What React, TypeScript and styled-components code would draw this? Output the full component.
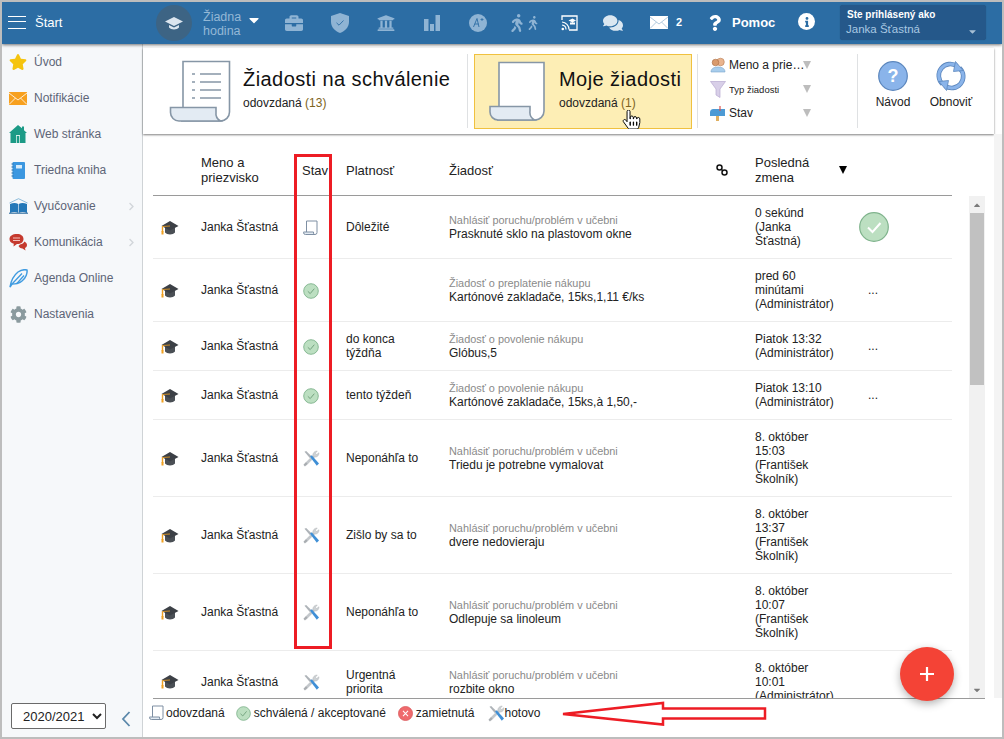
import React from "react";
import styled, { createGlobalStyle } from "styled-components";
import { FaBriefcase, FaCog, FaHandPointer, FaStar, FaUniversity, FaWalking, FaComments, FaQuestion, FaInfo, FaCaretDown, FaCaretUp, FaChevronRight } from "react-icons/fa";

const Global = createGlobalStyle`
  html, body { margin: 0; padding: 0; background: #fff; }
  body { font-family: "Liberation Sans", Arial, sans-serif; font-size: 12px; color: #222; overflow: hidden; }
  * { box-sizing: border-box; }
`;

const Frame = styled.div`
  position: relative; width: 1004px; height: 739px; border: 2px solid #bdbdbd;
  display: flex; flex-direction: column; overflow: hidden; background: #fff;
`;
const Header = styled.header`
  height: 42px; flex: none; background: #2c6da4; display: flex; align-items: center; color: #fff;
  box-shadow: 0 1px 3px rgba(0,0,0,.55); position: relative; z-index: 3;
`;
const Burger = styled.div`
  width: 18px; height: 13px; margin-left: 6px; margin-top: -2px; border-top: 1.5px solid #fff; border-bottom: 1.5px solid #fff; position: relative;
  &::after { content: ""; position: absolute; left: 0; right: 0; top: 4px; height: 1.5px; background: #fff; }
`;
const StartLabel = styled.span`
  font-size: 13px; margin-left: 9px; width: 121px; margin-top: -2px;
`;
const HatCircle = styled.div`
  width: 36px; height: 36px; border-radius: 50%; background: #3d6484; display: flex; align-items: center; justify-content: center; flex: none;
`;
const HourLabel = styled.div`
  font-size: 12.5px; line-height: 14px; color: #94b8d6; margin-left: 11px; width: 38px; margin-top: 1px;
`;
const HourCaret = styled.div`
  width: 25px; margin-left: 5px; display: flex; color: #fff; font-size: 16px; margin-top: -6px;
`;
const Slot = styled.div<{ $w?: number }>`
  width: ${p => p.$w ?? 46}px; display: flex; align-items: center; justify-content: center; color: #8fb4d4; flex: none; font-size: 18px; margin-top: -1px;
`;
const Count = styled.span`
  font-size: 11px; font-weight: bold; color: #fff; width: 14px; margin-left: -7px; margin-top: -2px;
`;
const HelpMark = styled.div`
  width: 35px; display: flex; justify-content: center; margin-left: 7px; color: #fff; font-size: 16px;
`;
const HelpLabel = styled.span`
  font-size: 13px; font-weight: bold; width: 66px; margin-top: -2px;
`;
const InfoDot = styled.div`
  width: 17px; height: 17px; border-radius: 50%; background: #fff; color: #2c6da4; display: flex; align-items: center; justify-content: center; font-size: 10px; margin-right: 25px; flex: none; margin-top: -3px;
`;
const UserBox = styled.div`
  width: 146px; height: 35px; background: #25588a; border-radius: 3px; padding: 4px 7px; position: relative; margin-top: -1px;
  box-shadow: 0 0 1px rgba(0,0,0,.3);
`;
const UserTitle = styled.div`font-size: 10px; font-weight: bold; line-height: 12px; color: #fff;`;
const UserName = styled.div`font-size: 11.5px; line-height: 16px; color: #a9c8e2; margin-left: -1px;`;
const UserCaret = styled.div`
  position: absolute; right: 8px; bottom: 3px; color: #a6bfd4; font-size: 11px; display: flex;
`;

const Body = styled.div`flex: 1; display: flex; min-height: 0;`;
const Sidebar = styled.nav`
  width: 141px; flex: none; background: #f6f8fa; border-right: 1px solid #cfd3d6; display: flex; flex-direction: column;
`;
const NavList = styled.div`flex: 1; padding-top: 0;`;
const NavItem = styled.div`
  height: 36px; display: flex; align-items: center; padding-left: 6px; color: #5d6577; font-size: 12px; position: relative; top: 0;
`;
const NavIcon = styled.div`
  width: 20px; height: 20px; margin-right: 6px; display: flex; align-items: center; justify-content: center; flex: none;
`;
const NavArrow = styled.div`
  position: absolute; left: 125px; color: #d2d6da; font-size: 9px; display: flex;
`;
const SidebarFoot = styled.div`
  height: 31px; padding-left: 9px; margin-bottom: 3px; display: flex; align-items: flex-start;
`;
const YearSelect = styled.select`
  width: 95px; height: 26px; font: 13px "Liberation Sans", Arial, sans-serif; color: #222; background: #fff; border: 1px solid #6a6a6a; border-radius: 2px; padding-left: 7px;
`;
const CollapseBtn = styled.div`
  margin-left: 15px; margin-top: 8px; display: flex;
`;

const Main = styled.main`flex: 1; min-width: 0; display: flex; flex-direction: column; position: relative; background: #fff;`;
const Toolbar = styled.section`
  height: 86px; margin-top: 4px; margin-right: 8px; flex: none; display: flex; align-items: center; background: #fff; box-shadow: 0 1px 2px rgba(0,0,0,.5);
`;
const SummaryCard = styled.div<{ $active?: boolean }>`
  height: 75px; display: flex; align-items: center; flex: none; position: relative;
  width: ${p => p.$active ? 218 : 324}px;
  padding-left: ${p => p.$active ? 14 : 26}px;
  background: ${p => p.$active ? "#fdeeb5" : "#fff"};
  border: ${p => p.$active ? "1px solid #f0c13f" : "0"};
  margin-left: ${p => p.$active ? 6 : 0}px;
  margin-right: ${p => p.$active ? 5 : 0}px;
`;
const CardText = styled.div<{ $active?: boolean }>`margin-left: ${p => p.$active ? 14 : 12}px; margin-top: -4px;`;
const CardTitle = styled.div`font-size: 20px; line-height: 24px; color: #111; letter-spacing: .43px; white-space: nowrap;`;
const CardSub = styled.div`font-size: 12px; line-height: 16px; margin-top: 4px; color: #222; span { color: #7d6420; }`;
const VRule = styled.div`width: 1px; height: 74px; background: #dfe1e3; flex: none;`;
const Filters = styled.div`width: 159px; flex: none; padding-left: 12px; display: flex; flex-direction: column; gap: 4px; margin-top: -4px;`;
const FilterRow = styled.div`height: 20px; display: flex; align-items: center; width: 102px; position: relative;`;
const FilterIcon = styled.div`width: 19px; flex: none; display: flex; align-items: center;`;
const FilterLabel = styled.span<{ $small?: boolean }>`
  font-size: ${p => p.$small ? 9.5 : 12}px; color: #222; white-space: nowrap; overflow: hidden; text-overflow: ellipsis; width: 78px; margin-right: -4px;
`;
const FilterTriangle = styled.div`
  width: 0; height: 0; border-left: 4px solid transparent; border-right: 4px solid transparent; border-top: 8px solid #bdbdbd; flex: none; margin-left: 0;
`;
const Actions = styled.div`display: flex; padding-left: 5px; flex: none; margin-top: -13px;`;
const ActionBtn = styled.div<{ $w: number }>`
  width: ${p => p.$w}px; display: flex; flex-direction: column; align-items: center; gap: 4px; font-size: 12px; color: #222;
`;

const Content = styled.div`flex: 1; min-height: 0; display: flex; padding: 11px 0 0 10px; overflow: hidden;`;
const TableWrap = styled.div`width: 799px; flex: none; display: flex; flex-direction: column; min-height: 0;`;
const Cols = "48px 101px 44px 103px 260px 46px 96px 1fr";
const HeadRow = styled.div`
  display: grid; grid-template-columns: ${Cols}; height: 51px; align-items: center; border-bottom: 1px solid #9a9a9a; flex: none; font-size: 13px; line-height: 15px; color: #222;
`;
const SortCell = styled.div`display: flex; align-items: center;`;
const SortName = styled.span`width: 84px;`;
const SortMark = styled.span`width: 0; height: 0; border-left: 4px solid transparent; border-right: 4px solid transparent; border-top: 8px solid #000; margin-top: -1px;`;
const Rows = styled.div`flex: 1; overflow: hidden; min-height: 0;`;
const Row = styled.div<{ $h: number }>`
  display: grid; grid-template-columns: ${Cols}; align-items: center; height: ${p => p.$h}px; border-bottom: 1px solid #ececec; font-size: 12px; line-height: 14px; color: #222;
`;
const CapCell = styled.div`display: flex; padding-left: 8px; margin-top: 1px;`;
const LinkCell = styled.div`display: flex; padding-left: 7px;`;
const BigCell = styled.div`display: flex; padding-left: 8px;`;
const StateCell = styled.div`display: flex; justify-content: flex-start; padding-left: 1px; margin-top: 1px;`;
const TypeText = styled.div`font-size: 10.9px; color: #8a8a8a; line-height: 14px;`;
const More = styled.div`text-align: left; padding-left: 17px;`;
const ScrollTrack = styled.div`
  width: 16px; margin: 51px 0 0 17px; background: #f1f1f1; display: flex; flex-direction: column; align-items: center; flex: none; position: relative;
`;
const ScrollArrow = styled.div`height: 17px; display: flex; align-items: center; justify-content: center; color: #7a7a7a; font-size: 10px; flex: none;`;
const ScrollThumb = styled.div`width: 14px; height: 172px; background: #c1c1c1; flex: none;`;
const ScrollGap = styled.div`flex: 1;`;
const Gutter = styled.div`width: 8px; margin-left: 9px; background: #f4f4f4; flex: none; margin-top: -11px;`;

const Legend = styled.footer`
  height: 39px; flex: none; margin: 0 17px 0 10px; border-top: 1px solid #9a9a9a; display: flex; align-items: center; padding-bottom: 10px; font-size: 12px; color: #222; position: relative; left: 0;
`;
const LegendItem = styled.div<{ $ml: number; $gap?: number }>`
  display: flex; align-items: center; gap: ${p => p.$gap ?? 3}px; margin-left: ${p => p.$ml}px;
`;
const Fab = styled.div`
  position: absolute; right: 48px; bottom: 36px; width: 54px; height: 54px; border-radius: 50%; background: #f44336; box-shadow: 0 3px 8px rgba(0,0,0,.3); display: flex; align-items: center; justify-content: center; z-index: 2;
`;
const Annotations = styled.svg`position: absolute; left: -2px; top: -2px; pointer-events: none; z-index: 4;`;
const Cursor = styled.div`position: absolute; left: 620px; top: 108px; z-index: 5; display: flex; font-size: 19px;`;

const Scroll = ({ size = 62 }: { size?: number }) => (
  <svg width={size} height={size} viewBox="0 0 62 62">
    <path d="M14 48V1.500H60.500V52a9 9 0 0 1-9 9H12" fill="#fff" stroke="#8696a6" strokeWidth="1.600" />
    <path d="M1.500 47.500H47V52a9 9 0 0 0 4.500 9H10a8.500 8.500 0 0 1-8.500-8.500Z" fill="#e3ebf3" stroke="#8696a6" strokeWidth="1.600" />
    <g stroke="#8696a6" strokeWidth="1.300">
      <path d="M23 14h3M31 14h21M23 22h3M31 22h21M23 30h3M31 30h21M23 38h3M31 38h21" />
    </g>
  </svg>
);
const MoveScroll = () => (
  <svg width="56" height="60" viewBox="0 0 56 60">
    <path d="M10 46V1.500H55V50a9 9 0 0 1-9 9H8" fill="#fff" stroke="#8696a6" strokeWidth="1.600" />
    <path d="M1 45.500H41V50a9 9 0 0 0 4.500 9H9a8 8 0 0 1-8-8Z" fill="#e3ebf3" stroke="#8696a6" strokeWidth="1.600" />
  </svg>
);
const DocSmall = () => (
  <svg width="15" height="16" viewBox="0 0 15 16">
    <path d="M3.500 12V1H14V12.500a2 2 0 0 1-2 2H3" fill="#fff" stroke="#7e8fa3" strokeWidth="1" />
    <path d="M.5 12H10.500V13a2 2 0 0 0 1 1.500H2.500a2 2 0 0 1-2-2Z" fill="#e3ebf3" stroke="#7e8fa3" strokeWidth="1" />
  </svg>
);
const CheckCircle = ({ size = 16 }: { size?: number }) => (
  <svg width={size} height={size} viewBox="0 0 16 16">
    <circle cx="8" cy="8" r="7.300" fill="#bcdfc1" stroke="#7fb38c" strokeWidth=".9" />
    <path d="M4.800 8.300 7.200 10.600 11.300 5.700" fill="none" stroke="#6b9b77" strokeWidth=".9" />
  </svg>
);
const BigCheck = () => (
  <svg width="30" height="30" viewBox="0 0 30 30">
    <circle cx="15" cy="15" r="14.300" fill="#bcdfc1" stroke="#7fb38c" strokeWidth="1.200" />
    <path d="M9 15.500 13.500 20 21.500 11" fill="none" stroke="#fff" strokeWidth="2" />
  </svg>
);
const CrossCircle = () => (
  <svg width="15" height="15" viewBox="0 0 16 16">
    <circle cx="8" cy="8" r="7.500" fill="#ef6a6d" stroke="#d9575a" strokeWidth=".8" />
    <path d="M5.300 5.300 10.700 10.700M10.700 5.300 5.300 10.700" stroke="#fff" strokeWidth="1.100" />
  </svg>
);
const Tools = ({ size = 17 }: { size?: number }) => (
  <svg width={size} height={size} viewBox="0 0 17 17">
    <path d="M2.500 14.500 11.500 5.500" stroke="#c4c8cc" strokeWidth="2.600" />
    <path d="M10 6C9.300 3.200 11.500 1 14.300 1L12.400 3.200 13.600 4.600 15.900 2.700C16.200 5.500 13.800 7.600 11.300 7Z" fill="#ced2d5" stroke="#a6abaf" strokeWidth=".4" />
    <path d="M1.500 1.800 3.200 1 8.500 6.300 6.800 8Z" fill="#aeb3b8" />
    <path d="M7 6.800 8.700 5.200 16 13.500 13.800 15.700Z" fill="#3f8fd6" />
    <path d="M1.200 15.600 3.800 13" stroke="#a9adb1" strokeWidth="2.200" />
  </svg>
);
const Cap = () => (
  <svg width="18" height="16" viewBox="0 0 18 16">
    <path d="M4 7.500V12.500C6 15 12 15 14 12.500V7.500Z" fill="#4a4f55" />
    <path d="M9 1 17.500 6 9 10.500 .5 6Z" fill="#3c4046" />
    <path d="M1.500 6.500V12" stroke="#f0a020" strokeWidth="1.400" />
    <path d="M1.500 6.500 9 6" stroke="#f0a020" strokeWidth=".8" />
    <rect x=".5" y="11" width="2" height="3.500" fill="#f0a020" />
  </svg>
);
const HatWhite = () => (
  <svg width="18" height="16" viewBox="0 0 18 16">
    <path d="M9 2 18 6.500 9 11 0 6.500Z" fill="#dbe5ee" />
    <path d="M4 10V12.500C6 15 12 15 14 12.500V10L9 12.500Z" fill="#dbe5ee" />
  </svg>
);
const Shield = () => (
  <svg width="18" height="20" viewBox="0 0 18 20">
    <path d="M9 0 18 3V9c0 5-4 9-9 11C4 18 0 14 0 9V3Z" fill="#8fb4d4" />
    <path d="M5.500 9.800 8 12.200 12.500 7.500" fill="none" stroke="#2c6da4" strokeWidth=".9" />
  </svg>
);
const Bars = () => (
  <svg width="16" height="16" viewBox="0 0 16 16">
    <rect x="0" y="4" width="4.500" height="12" fill="#8fb4d4" />
    <rect x="6" y="9" width="4" height="7" fill="#8fb4d4" />
    <rect x="11.500" y="0" width="4.500" height="16" fill="#8fb4d4" />
  </svg>
);
const Grade = () => (
  <svg width="18" height="18" viewBox="0 0 18 18">
    <circle cx="9" cy="9" r="9" fill="#8fb4d4" />
    <path d="M4.500 13 8 4.500 10 13M5.800 10H9.500" fill="none" stroke="#2c6da4" strokeWidth=".9" />
    <path d="M11.500 5.500h3M13 4v3" stroke="#2c6da4" strokeWidth=".8" />
  </svg>
);
const Cast = () => (
  <svg width="17" height="16" viewBox="0 0 17 16">
    <path d="M1 5V1H16V15H8" fill="none" stroke="#fff" strokeWidth="1.300" />
    <path d="M7.500 5.500 11.500 3.500 15 5.500 11.500 7.500Z M9 7.500V9.500H14V7.500" fill="#fff" />
    <path d="M1 7a7.500 7.500 0 0 1 7 7.500M1 10a4.500 4.500 0 0 1 4 4.500" fill="none" stroke="#fff" strokeWidth="1.200" />
    <circle cx="1.800" cy="14" r="1.300" fill="#fff" />
  </svg>
);
const Mail = ({ w = 18, h = 13, fill = "#fff", line = "#9dbbd4" }: { w?: number; h?: number; fill?: string; line?: string }) => (
  <svg width={w} height={h} viewBox="0 0 18 13">
    <rect width="18" height="13" fill={fill} />
    <path d="M0 1 9 8 18 1M0 12.500 6.500 6M18 12.500 11.500 6" fill="none" stroke={line} strokeWidth=".8" />
  </svg>
);
const House = () => (
  <svg width="18" height="18" viewBox="0 0 18 18">
    <path d="M9 0 13 3.300V1.500H15V5.200L18 8H16.500V18H1.500V8H0Z" fill="#1c9a86" />
    <rect x="7" y="10" width="4" height="8" fill="#d5efe9" />
    <rect x="7.800" y="11" width="2.400" height="7" fill="#1c9a86" />
  </svg>
);
const Notebook = () => (
  <svg width="14" height="17" viewBox="0 0 14 17">
    <rect x="1.500" width="12.500" height="17" rx="1" fill="#3b97e0" />
    <path d="M.5 2h2M.5 5h2M.5 8h2M.5 11h2M.5 14h2" stroke="#1e6aa8" strokeWidth="1" />
    <rect x="5" y="3" width="6" height="3.500" fill="#d7ecfa" />
  </svg>
);
const OpenBook = () => (
  <svg width="19" height="16" viewBox="0 0 19 16">
    <path d="M.5 5 9.500 .7 18.500 5" fill="none" stroke="#7fb3d6" strokeWidth=".9" />
    <path d="M1 6C4 4.500 7 4.500 9.200 6V15C7 13.600 4 13.600 1 15Z" fill="#2478b8" />
    <path d="M18 6C15 4.500 12 4.500 9.800 6V15C12 13.600 15 13.600 18 15Z" fill="#2478b8" />
    <path d="M0 15.200H19" stroke="#1c5f94" strokeWidth="1" />
  </svg>
);
const RedChat = () => (
  <svg width="18" height="17" viewBox="0 0 18 17">
    <path d="M8 0C12 0 14.500 2 14.500 5S12 10 8 10L4.500 12.500 4.800 9.700C2 9 .5 7.500.5 5 .5 2 3.500 0 8 0Z" fill="#c53a2e" />
    <path d="M4 4h7M4 6.500h7" stroke="#f3c2bc" strokeWidth="1" />
    <path d="M11 10.500C13 10 15 9 15.300 7.500 17 8.300 18 9.500 18 11 18 12.500 17 13.500 16 14L16.500 16.500 13.500 14.500C11.500 14.500 10 13 9.500 12Z" fill="#c53a2e" />
  </svg>
);
const Feather = () => (
  <svg width="19" height="19" viewBox="0 0 19 19">
    <path d="M1 18C2 12 4 7 9 3 12 1 16 .5 18 1 18.500 4 17 9 13 12 10 14.500 6 15 3 15Z" fill="none" stroke="#3f9be0" strokeWidth="1.500" />
    <path d="M3 15 13 4.500M7.500 15 15 6.500" stroke="#3f9be0" strokeWidth="1.300" />
  </svg>
);
const People = () => (
  <svg width="16" height="16" viewBox="0 0 16 16">
    <circle cx="10.500" cy="5" r="3.800" fill="#e9b48e" stroke="#b77a50" strokeWidth=".6" />
    <circle cx="5.500" cy="5.500" r="3.300" fill="#d99a6c" stroke="#a96c42" strokeWidth=".6" />
    <path d="M1 15C1 11.500 4 10 8 10S15 11.500 15 15Z" fill="#a8cdec" stroke="#7ba6cc" strokeWidth=".6" />
  </svg>
);
const Funnel = () => (
  <svg width="16" height="17" viewBox="0 0 16 17">
    <path d="M.5.500H15.500L10 8V16.500L6 14V8Z" fill="#d8cfe8" stroke="#b7a9d0" strokeWidth=".7" />
  </svg>
);
const Mailbox = () => (
  <svg width="16" height="15" viewBox="0 0 16 15">
    <path d="M3.500 3H15V10H0V6.500A3.500 3.500 0 0 1 3.500 3Z" fill="#4d9ad4" />
    <rect x="6" y="10" width="3" height="5" fill="#e0b060" />
    <path d="M10 0V5" stroke="#d9534f" strokeWidth="1.200" />
  </svg>
);
const ChainLink = () => (
  <svg width="12" height="12" viewBox="0 0 12 12">
    <circle cx="3.500" cy="3.500" r="2.500" fill="none" stroke="#111" strokeWidth="1.500" />
    <circle cx="8.500" cy="8.500" r="2.500" fill="none" stroke="#111" strokeWidth="1.500" />
    <path d="M5 5 7 7" stroke="#111" strokeWidth="1.500" />
  </svg>
);
const Chevron = () => (
  <svg width="10" height="16" viewBox="0 0 10 16">
    <path d="M8.500 1 2 8 8.500 15" fill="none" stroke="#5b88aa" strokeWidth="1.800" />
  </svg>
);
const HelpBig = () => (
  <svg width="30" height="30" viewBox="0 0 30 30">
    <circle cx="15" cy="15" r="14.300" fill="#8ab4ea" stroke="#5b86bd" strokeWidth="1.200" />
    <text x="15" y="21" textAnchor="middle" fontSize="18" fontWeight="bold" fontFamily="Liberation Sans" fill="#fff">?</text>
  </svg>
);
const Refresh = () => (
  <svg width="30" height="30" viewBox="0 0 30 30">
    <g fill="none" strokeLinecap="butt">
      <path d="M6.500 23A11.500 11.500 0 0 1 21 5.200" stroke="#5b86bd" strokeWidth="4.600" />
      <path d="M23.500 7A11.500 11.500 0 0 1 9 24.800" stroke="#5b86bd" strokeWidth="4.600" />
      <path d="M6.500 23A11.500 11.500 0 0 1 21 5.200" stroke="#8ab4ea" strokeWidth="3" />
      <path d="M23.500 7A11.500 11.500 0 0 1 9 24.800" stroke="#8ab4ea" strokeWidth="3" />
    </g>
    <path d="M19.500 .5 27 9.500 17.500 10.500Z" fill="#8ab4ea" stroke="#5b86bd" strokeWidth=".8" />
    <path d="M10.500 29.500 3 20.500 12.500 19.500Z" fill="#8ab4ea" stroke="#5b86bd" strokeWidth=".8" />
  </svg>
);
const Plus = () => (
  <svg width="16" height="16" viewBox="0 0 16 16"><path d="M8 1V15M1 8H15" stroke="#fff" strokeWidth="2.200" /></svg>
);

const nav: { label: string; icon: React.ReactNode; arrow?: boolean }[] = [
  { label: "Úvod", icon: <FaStar color="#f5c40f" size={18} /> },
  { label: "Notifikácie", icon: <Mail fill="#f7a01e" line="#fff" /> },
  { label: "Web stránka", icon: <House /> },
  { label: "Triedna kniha", icon: <Notebook /> },
  { label: "Vyučovanie", icon: <OpenBook />, arrow: true },
  { label: "Komunikácia", icon: <RedChat />, arrow: true },
  { label: "Agenda Online", icon: <Feather /> },
  { label: "Nastavenia", icon: <FaCog color="#8a9a9e" size={17} /> },
];

type St = "doc" | "ok" | "tools";
const rows: { h: number; st: St; when?: React.ReactNode; type: string; text: string; last: React.ReactNode; act?: "big" | "more" }[] = [
  { h: 63, st: "doc", when: "Dôležité", type: "Nahlásiť poruchu/problém v učebni", text: "Prasknuté sklo na plastovom okne", last: <>0 sekúnd<br />(Janka<br />Šťastná)</>, act: "big" },
  { h: 63, st: "ok", type: "Žiadosť o preplatenie nákupu", text: "Kartónové zakladače, 15ks,1,11 €/ks", last: <>pred 60<br />minútami<br />(Administrátor)</>, act: "more" },
  { h: 49, st: "ok", when: <>do konca<br />týždňa</>, type: "Žiadosť o povolenie nákupu", text: "Glóbus,5", last: <>Piatok 13:32<br />(Administrátor)</>, act: "more" },
  { h: 49, st: "ok", when: "tento týždeň", type: "Žiadosť o povolenie nákupu", text: "Kartónové zakladače, 15ks,à 1,50,-", last: <>Piatok 13:10<br />(Administrátor)</>, act: "more" },
  { h: 77, st: "tools", when: "Neponáhľa to", type: "Nahlásiť poruchu/problém v učebni", text: "Triedu je potrebne vymalovat", last: <>8. október<br />15:03<br />(František<br />Školník)</> },
  { h: 77, st: "tools", when: "Zišlo by sa to", type: "Nahlásiť poruchu/problém v učebni", text: "dvere nedovieraju", last: <>8. október<br />13:37<br />(František<br />Školník)</> },
  { h: 77, st: "tools", when: "Neponáhľa to", type: "Nahlásiť poruchu/problém v učebni", text: "Odlepuje sa linoleum", last: <>8. október<br />10:07<br />(František<br />Školník)</> },
  { h: 62, st: "tools", when: <>Urgentná<br />priorita</>, type: "Nahlásiť poruchu/problém v učebni", text: "rozbite okno", last: <>8. október<br />10:01<br />(Administrátor)</> },
];
const stateIcon = (s: St) => s === "doc" ? <DocSmall /> : s === "ok" ? <CheckCircle /> : <Tools />;

export default function App() {
  return (
    <>
      <Global />
      <Frame>
        <Header>
          <Burger />
          <StartLabel>Štart</StartLabel>
          <HatCircle><HatWhite /></HatCircle>
          <HourLabel>Žiadna hodina</HourLabel>
          <HourCaret><FaCaretDown /></HourCaret>
          <Slot><FaBriefcase /></Slot>
          <Slot><Shield /></Slot>
          <Slot><FaUniversity /></Slot>
          <Slot><Bars /></Slot>
          <Slot><Grade /></Slot>
          <Slot>
            <FaWalking size={18} /><FaWalking size={14} />
          </Slot>
          <Slot $w={44}><Cast /></Slot>
          <Slot $w={44}><FaComments color="#dbe7f1" size={20} /></Slot>
          <Slot $w={48}><Mail /></Slot>
          <Count>2</Count>
          <HelpMark><FaQuestion /></HelpMark>
          <HelpLabel>Pomoc</HelpLabel>
          <InfoDot><FaInfo /></InfoDot>
          <UserBox>
            <UserTitle>Ste prihlásený ako</UserTitle>
            <UserName>Janka Šťastná</UserName>
            <UserCaret><FaCaretDown /></UserCaret>
          </UserBox>
        </Header>
        <Body>
          <Sidebar>
            <NavList>
              {nav.map(n => (
                <NavItem key={n.label}>
                  <NavIcon>{n.icon}</NavIcon>
                  {n.label}
                  {n.arrow && <NavArrow><FaChevronRight /></NavArrow>}
                </NavItem>
              ))}
            </NavList>
            <SidebarFoot>
              <YearSelect defaultValue="2020/2021">
                <option>2020/2021</option>
              </YearSelect>
              <CollapseBtn><Chevron /></CollapseBtn>
            </SidebarFoot>
          </Sidebar>
          <Main>
            <Toolbar>
              <SummaryCard>
                <Scroll />
                <CardText>
                  <CardTitle>Žiadosti na schválenie</CardTitle>
                  <CardSub>odovzdaná <span>(13)</span></CardSub>
                </CardText>
              </SummaryCard>
              <VRule />
              <SummaryCard $active>
                <MoveScroll />
                <CardText $active>
                  <CardTitle>Moje žiadosti</CardTitle>
                  <CardSub>odovzdaná <span>(1)</span></CardSub>
                </CardText>
              </SummaryCard>
              <VRule />
              <Filters>
                <FilterRow>
                  <FilterIcon><People /></FilterIcon>
                  <FilterLabel>Meno a priezvisko</FilterLabel>
                  <FilterTriangle />
                </FilterRow>
                <FilterRow>
                  <FilterIcon><Funnel /></FilterIcon>
                  <FilterLabel $small>Typ žiadosti</FilterLabel>
                  <FilterTriangle />
                </FilterRow>
                <FilterRow>
                  <FilterIcon><Mailbox /></FilterIcon>
                  <FilterLabel>Stav</FilterLabel>
                  <FilterTriangle />
                </FilterRow>
              </Filters>
              <VRule />
              <Actions>
                <ActionBtn $w={60}><HelpBig />Návod</ActionBtn>
                <ActionBtn $w={56}><Refresh />Obnoviť</ActionBtn>
              </Actions>
            </Toolbar>
            <Content>
              <TableWrap>
                <HeadRow>
                  <div />
                  <div>Meno a<br />priezvisko</div>
                  <div>Stav</div>
                  <div>Platnosť</div>
                  <div>Žiadosť</div>
                  <LinkCell><ChainLink /></LinkCell>
                  <SortCell><SortName>Posledná zmena</SortName><SortMark /></SortCell>
                  <div />
                </HeadRow>
                <Rows>
                  {rows.map((r, i) => (
                    <Row key={i} $h={r.h}>
                      <CapCell><Cap /></CapCell>
                      <div>Janka Šťastná</div>
                      <StateCell>{stateIcon(r.st)}</StateCell>
                      <div>{r.when}</div>
                      <div><TypeText>{r.type}</TypeText>{r.text}</div>
                      <div />
                      <div>{r.last}</div>
                      {r.act === "big" ? <BigCell><BigCheck /></BigCell> : r.act === "more" ? <More>...</More> : <div />}
                    </Row>
                  ))}
                </Rows>
              </TableWrap>
              <ScrollTrack>
                <ScrollArrow><FaCaretUp /></ScrollArrow>
                <ScrollThumb />
                <ScrollGap />
                <ScrollArrow><FaCaretDown /></ScrollArrow>
              </ScrollTrack>
              <Gutter />
            </Content>
            <Legend>
              <LegendItem $ml={-4} $gap={2}><DocSmall />odovzdaná</LegendItem>
              <LegendItem $ml={11}><CheckCircle size={15} />schválená / akceptované</LegendItem>
              <LegendItem $ml={12}><CrossCircle />zamietnutá</LegendItem>
              <LegendItem $ml={13} $gap={0}><Tools />hotovo</LegendItem>
            </Legend>
            <Fab><Plus /></Fab>
          </Main>
        </Body>
        <Cursor><FaHandPointer color="#fff" stroke="#000" strokeWidth={26} /></Cursor>
        <Annotations width="1004" height="739" viewBox="0 0 1004 739">
          <rect x="295.500" y="155.500" width="35" height="492" fill="none" stroke="#ed1c24" strokeWidth="3" />
          <path d="M563 714 663 703V708.500H765V718.500H663V724.500Z" fill="none" stroke="#ed1c24" strokeWidth="2.500" />
        </Annotations>
      </Frame>
    </>
  );
}
